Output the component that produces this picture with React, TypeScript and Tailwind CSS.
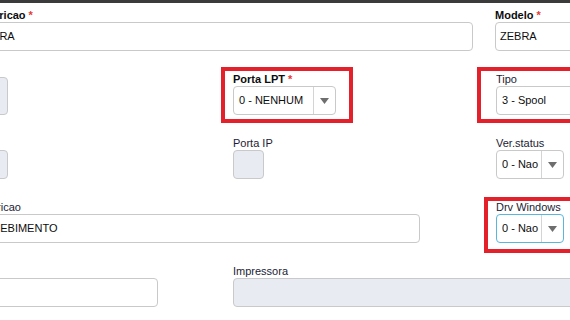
import React from 'react';

const font = "font-['Liberation_Sans',Arial,sans-serif]";

function Label({ text, required, bold, h = 'h-[14px]' }: { text?: string; required?: boolean; bold?: boolean; h?: string }) {
    return (
        <div className={`${h} leading-[14px] text-[11px] whitespace-nowrap ${bold ? 'font-bold text-[#0d0d0d]' : 'text-[#1c1c34]'}`}>
            {text}
            {required && <span className="text-[#e53935] ml-[3px]">*</span>}
        </div>
    );
}

function TextInput({ value, disabled, className = '' }: { value?: string; disabled?: boolean; className?: string }) {
    return (
        <div
            className={`h-[29px] rounded-[4px] border border-[#c9c9c9] flex items-center pl-[4px] text-[11px] text-[#0d0d0d] whitespace-nowrap overflow-hidden ${disabled ? 'bg-[#e8ebf2]' : 'bg-white'} ${className}`}
        >
            {value}
        </div>
    );
}

function Select({ value, width, focus, noArrow }: { value: string; width?: string; focus?: boolean; noArrow?: boolean }) {
    return (
        <div
            className={`h-[29px] rounded-[4px] border flex items-stretch bg-white text-[11px] text-[#0d0d0d] ${focus ? 'border-[#5bb6dc]' : 'border-[#c9c9c9]'} ${width ?? ''}`}
        >
            <div className="flex-1 flex items-center pl-[5px] whitespace-nowrap overflow-hidden">{value}</div>
            {!noArrow && (
                <div className="w-[22px] border-l border-[#d4d4d4] flex items-center justify-center">
                    <svg width="9" height="6" viewBox="0 0 9 6">
                        <path d="M0 0 L9 0 L4.5 6 Z" fill="#6e6e6e" />
                    </svg>
                </div>
            )}
        </div>
    );
}

export default function App() {
    return (
        <div className={`relative w-[570px] h-[320px] overflow-hidden bg-white ${font}`}>
            <div className="h-[3px] bg-[#3b3b3b]" />

            <div className="ml-[-27px] pt-[5px] flex flex-col gap-[21px]">
                {/* linha 1 */}
                <div className="grid grid-cols-[260px_263px_263px]">
                    <div className="col-span-2 w-[500px]">
                        <Label text="Descricao" required bold />
                        <TextInput value="ZEBRA" />
                    </div>
                    <div className="ml-[-1px]">
                        <Label text="Modelo" required bold />
                        <TextInput value="ZEBRA" />
                    </div>
                </div>

                {/* linha 2 */}
                <div className="grid grid-cols-[260px_263px_263px]">
                    <div>
                        <Label h="h-[5px]" />
                        <TextInput disabled className="w-[35px] h-[38px]" />
                    </div>
                    <div>
                        <Label text="Porta LPT" required bold />
                        <Select value="0 - NENHUM" width="w-[103px]" />
                    </div>
                    <div>
                        <Label text="Tipo" />
                        <Select value="3 - Spool" noArrow />
                    </div>
                </div>

                {/* linha 3 */}
                <div className="grid grid-cols-[260px_263px_263px]">
                    <div>
                        <Label />
                        <TextInput disabled className="w-[35px]" />
                    </div>
                    <div>
                        <Label text="Porta IP" />
                        <TextInput disabled className="w-[31px]" />
                    </div>
                    <div>
                        <Label text="Ver.status" />
                        <Select value="0 - Nao" width="w-[68px]" />
                    </div>
                </div>

                {/* linha 4 */}
                <div className="grid grid-cols-[260px_263px_263px]">
                    <div className="col-span-2 w-[448px] ml-[-1px]">
                        <Label text="Descricao" />
                        <TextInput value="RECEBIMENTO" />
                    </div>
                    <div>
                        <Label text="Drv Windows" />
                        <Select value="0 - Nao" width="w-[68px]" focus />
                    </div>
                </div>

                {/* linha 5 */}
                <div className="grid grid-cols-[260px_263px_263px]">
                    <div>
                        <Label text="Fila" />
                        <TextInput className="w-[185px]" />
                    </div>
                    <div className="col-span-2">
                        <Label text="Impressora" />
                        <TextInput disabled />
                    </div>
                </div>
            </div>

            {/* marcações em vermelho */}
            <div className="absolute left-[221px] top-[67px] w-[132px] h-[56px] border-[4px] border-[#e4202a]" />
            <div className="absolute left-[477px] top-[67px] w-[140px] h-[56px] border-[4px] border-[#e4202a]" />
            <div className="absolute left-[484px] top-[197px] w-[140px] h-[56px] border-[4px] border-[#e4202a]" />
        </div>
    );
}
